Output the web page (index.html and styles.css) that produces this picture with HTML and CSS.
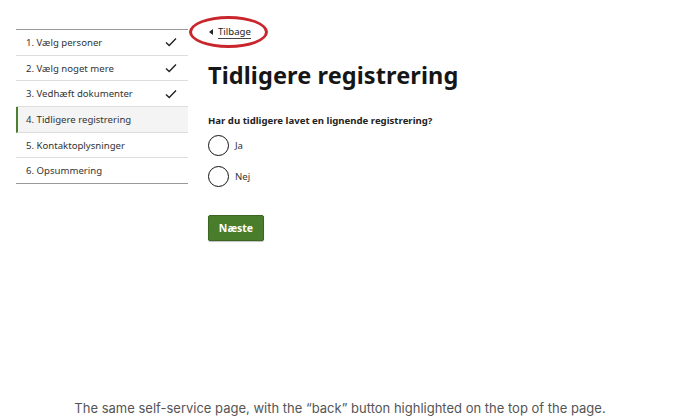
FILE: index.html
```html
<!DOCTYPE html>
<html lang="da">
<head>
<meta charset="utf-8">
<link rel="stylesheet" href="styles.css">
</head>
<body>
<div class="frame">
  <div class="page">
    <nav class="steps">
      <div class="step done"><span>1. Vælg personer</span><svg class="check" viewBox="0 0 12 10" width="12" height="10"><path d="M1 5.5 L4.2 8.5 L11 1.5" fill="none" stroke="#222" stroke-width="1.4"/></svg></div>
      <div class="step done"><span>2. Vælg noget mere</span><svg class="check" viewBox="0 0 12 10" width="12" height="10"><path d="M1 5.5 L4.2 8.5 L11 1.5" fill="none" stroke="#222" stroke-width="1.4"/></svg></div>
      <div class="step done"><span>3. Vedhæft dokumenter</span><svg class="check" viewBox="0 0 12 10" width="12" height="10"><path d="M1 5.5 L4.2 8.5 L11 1.5" fill="none" stroke="#222" stroke-width="1.4"/></svg></div>
      <div class="step active"><span>4. Tidligere registrering</span></div>
      <div class="step"><span>5. Kontaktoplysninger</span></div>
      <div class="step"><span>6. Opsummering</span></div>
    </nav>
    <main class="content">
      <div class="back-wrap">
        <a class="back" href="#"><svg class="tri" viewBox="0 0 4 6" width="4" height="6"><path d="M4 0 L0 3 L4 6 Z" fill="#222"/></svg><span class="back-text">Tilbage</span></a>
        <span class="highlight"></span>
      </div>
      <h1 class="title">Tidligere registrering</h1>
      <p class="question">Har du tidligere lavet en lignende registrering?</p>
      <label class="radio"><span class="circle"></span><span>Ja</span></label>
      <label class="radio"><span class="circle"></span><span>Nej</span></label>
      <button class="next">Næste</button>
    </main>
  </div>
  <p class="caption">The same self-service page, with the “back” button highlighted on the top of the page.</p>
</div>
</body>
</html>
```
FILE: styles.css
```css
* { box-sizing: border-box; }
html, body { margin: 0; padding: 0; background: #fff; }
.frame {
  width: 680px;
  height: 419px;
  display: flex;
  flex-direction: column;
  font-family: "Noto Sans", "Open Sans", sans-serif;
  color: #222;
}
.page {
  display: flex;
  flex: 1;
}
.steps {
  margin-left: 16px;
  margin-top: 29px;
  width: 172px;
  border-top: 1px solid #999;
  align-self: flex-start;
}
.step {
  height: 25.7px;
  display: flex;
  align-items: center;
  justify-content: space-between;
  padding: 0 10px 0 10px;
  font-size: 9.6px;
  color: #333;
  border-bottom: 1px solid #ddd;
}
.step:last-child { border-bottom: 1px solid #999; }
.step.active {
  background: #f4f4f4;
  border-left: 2px solid #4c7f2e;
  padding-left: 8px;
  border-bottom-color: #ddd;
}
.check { margin-right: 1px; }
.content {
  margin-left: 20px;
  display: flex;
  flex-direction: column;
  align-items: flex-start;
}
.back-wrap {
  position: relative;
  margin-top: 23px;
  height: 18px;
  display: flex;
  align-items: center;
}
.back {
  display: flex;
  align-items: center;
  gap: 5px;
  color: #222;
  text-decoration: none;
  font-size: 9.6px;
}
.tri { margin-left: 1px; }
.back-text {
  border-bottom: 1px solid #444;
  line-height: 12px;
}
.highlight {
  position: absolute;
  left: -19px;
  top: -7px;
  width: 79px;
  height: 32px;
  border: 3px solid #c8262c;
  border-radius: 50%;
}
.title {
  margin: 19px 0 0 0;
  font-size: 23.5px;
  font-weight: 700;
  color: #161616;
  letter-spacing: 0.1px;
  line-height: 30px;
}
.question {
  margin: 24px 0 0 0;
  font-size: 9.6px;
  font-weight: 700;
  color: #222;
}
.radio {
  display: flex;
  align-items: center;
  gap: 6px;
  font-size: 9.6px;
  color: #333;
  margin-top: 8px;
}
.radio + .radio { margin-top: 10px; }
.circle {
  width: 21px;
  height: 21px;
  border: 1.5px solid #111;
  border-radius: 50%;
  display: inline-block;
}
.next {
  margin-top: 28px;
  width: 56px;
  height: 26px;
  background: #4a7d2b;
  color: #fff;
  border: 1px solid #3b6522;
  border-radius: 2px;
  font-family: "Noto Sans", sans-serif;
  font-weight: 700;
  font-size: 10.5px;
  padding: 0;
  box-shadow: 0 1px 1px rgba(0,0,0,0.25);
}
.caption {
  margin: 0 0 3px 0;
  text-align: center;
  font-family: "Inter", "Liberation Sans", sans-serif;
  font-size: 13px;
  color: #555;
}
```
